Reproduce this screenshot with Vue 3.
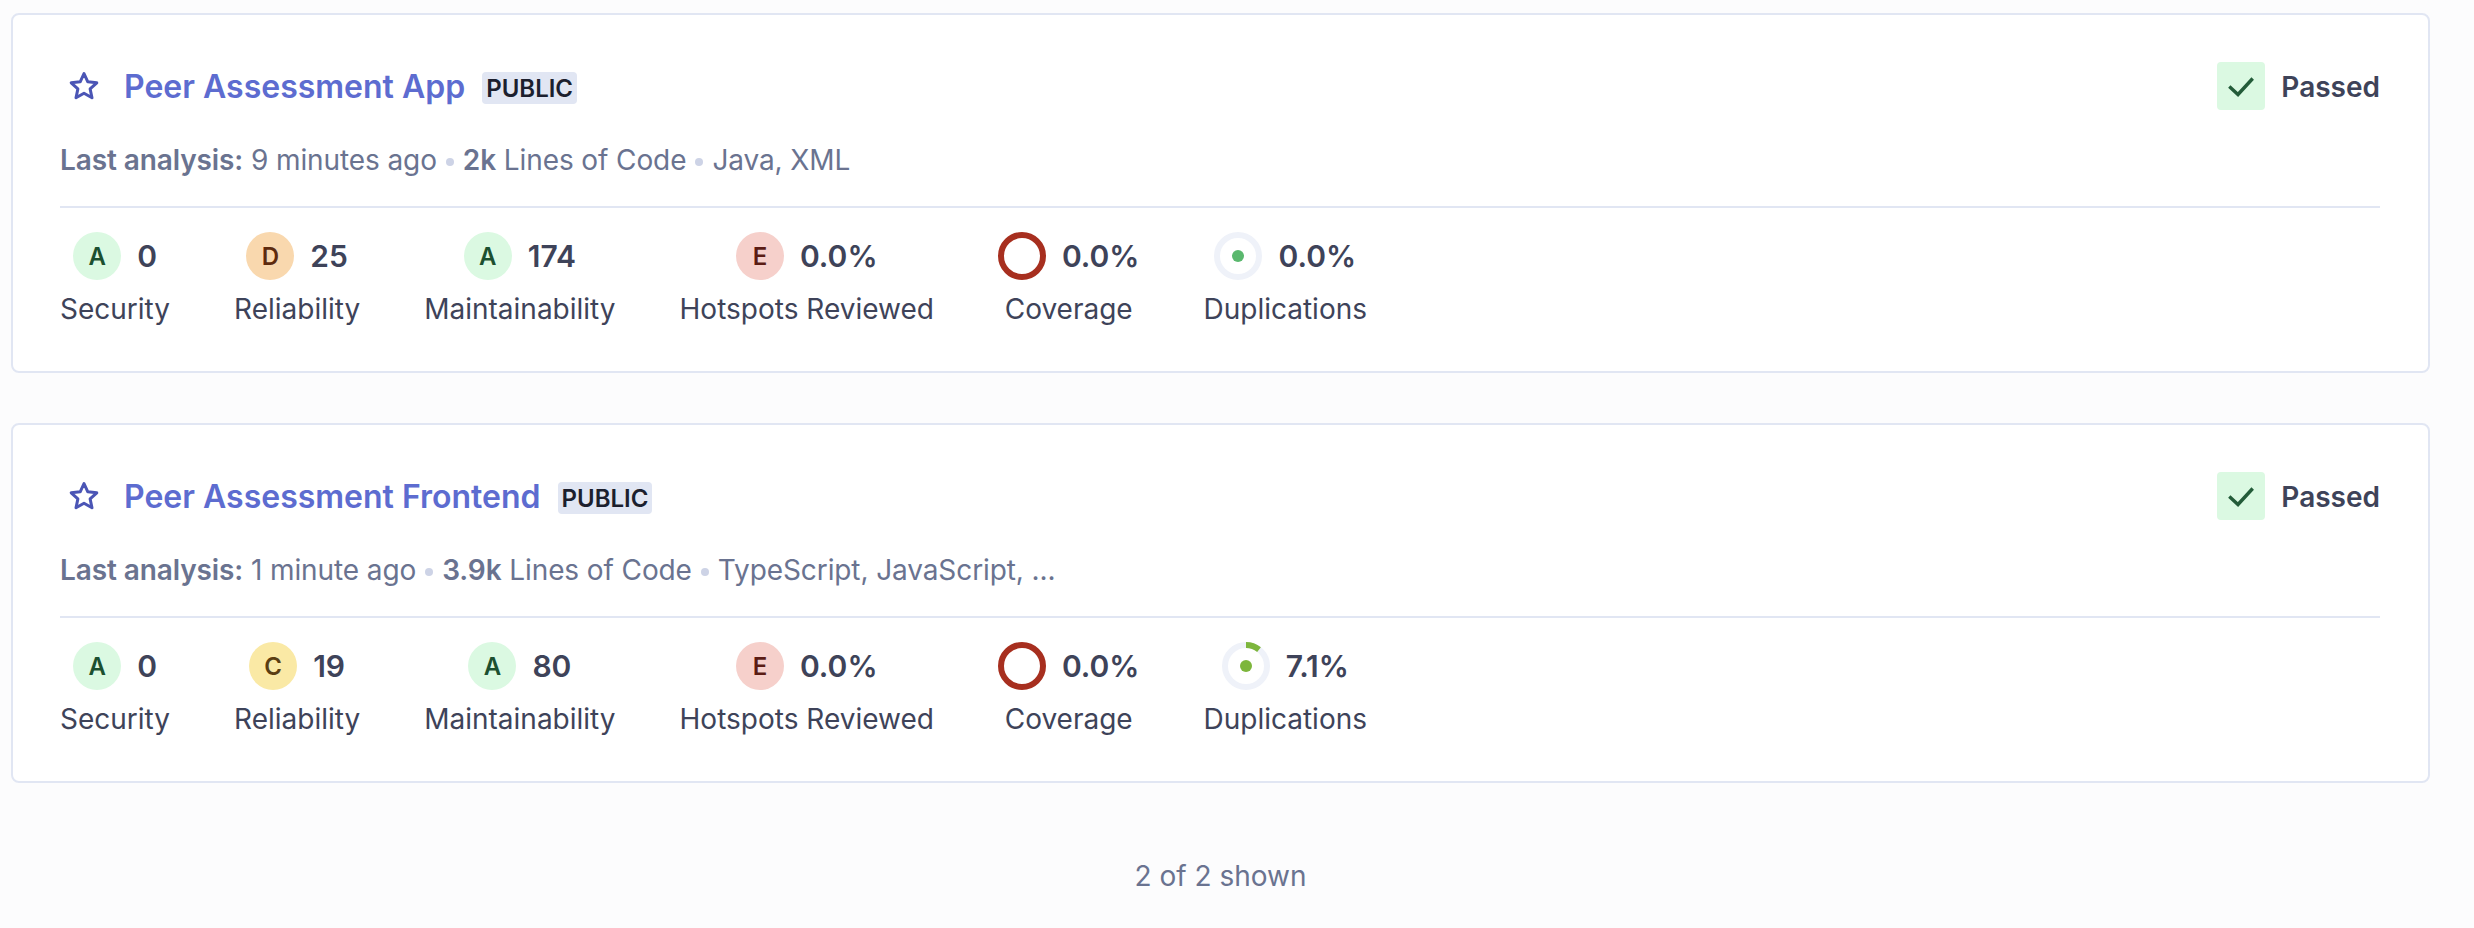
<template>
  <div class="project-list">
    <div v-for="project in projects" :key="project.name" class="project-card">
      <div class="card-head">
        <div class="title-row">
          <svg class="star" width="32" height="32" viewBox="0 0 32 32">
            <path d="M16 3.5l3.8 8.3 9 1-6.7 6.1 1.9 8.9-8-4.6-8 4.6 1.9-8.9-6.7-6.1 9-1z" fill="none" stroke="#4b55b5" stroke-width="3" stroke-linejoin="round" />
          </svg>
          <a class="title">{{ project.name }}</a>
          <span class="badge">PUBLIC</span>
        </div>
        <div class="status">
          <span class="status-box">
            <svg width="28" height="28" viewBox="0 0 28 28">
              <path d="M2.3 14.5l8.7 8L25.7 6.5" fill="none" stroke="#235c39" stroke-width="3.4" />
            </svg>
          </span>
          <span class="status-text">Passed</span>
        </div>
      </div>

      <div class="meta">
        <b>Last analysis:</b> {{ project.analysis }}<i class="dot"></i><b>{{ project.lines }}</b> Lines of Code<i class="dot"></i>{{ project.languages }}
      </div>

      <div class="metrics">
        <div v-for="metric in project.metrics" :key="metric.label" class="metric">
          <div class="metric-value">
            <span v-if="metric.rating" class="rating" :class="'rating-' + metric.rating">{{ metric.rating }}</span>
            <span v-else-if="metric.type === 'coverage'" class="coverage-ring"></span>
            <svg v-else class="dup-ring" width="48" height="48" viewBox="0 0 48 48">
              <circle cx="24" cy="24" r="21" fill="none" stroke="#eff2f9" stroke-width="6" />
              <circle
                v-if="metric.arc"
                cx="24"
                cy="24"
                r="21"
                fill="none"
                :stroke="metric.color"
                stroke-width="6"
                :stroke-dasharray="`${metric.arc} 200`"
                transform="rotate(-90 24 24)"
              />
              <circle cx="24" cy="24" r="6" :fill="metric.color" />
            </svg>
            <span class="value">{{ metric.value }}</span>
          </div>
          <div class="label">{{ metric.label }}</div>
        </div>
      </div>
    </div>

    <div class="shown">2 of 2 shown</div>
  </div>
</template>

<script setup>
const projects = [
  {
    name: 'Peer Assessment App',
    analysis: '9 minutes ago',
    lines: '2k',
    languages: 'Java, XML',
    metrics: [
      { label: 'Security', rating: 'A', value: '0' },
      { label: 'Reliability', rating: 'D', value: '25' },
      { label: 'Maintainability', rating: 'A', value: '174' },
      { label: 'Hotspots Reviewed', rating: 'E', value: '0.0%' },
      { label: 'Coverage', type: 'coverage', value: '0.0%' },
      { label: 'Duplications', type: 'dup', value: '0.0%', color: '#5ab86e', arc: 0 },
    ],
  },
  {
    name: 'Peer Assessment Frontend',
    analysis: '1 minute ago',
    lines: '3.9k',
    languages: 'TypeScript, JavaScript, ...',
    metrics: [
      { label: 'Security', rating: 'A', value: '0' },
      { label: 'Reliability', rating: 'C', value: '19' },
      { label: 'Maintainability', rating: 'A', value: '80' },
      { label: 'Hotspots Reviewed', rating: 'E', value: '0.0%' },
      { label: 'Coverage', type: 'coverage', value: '0.0%' },
      { label: 'Duplications', type: 'dup', value: '7.1%', color: '#7db63c', arc: 14 },
    ],
  },
]
</script>

<style>
html,
body {
  background: #fcfcfd;
}
</style>

<style scoped>
.project-list {
  padding: 13px 44px 0 11px;
  font-family: Inter, 'Liberation Sans', sans-serif;
  color: #3e4359;
}

.project-card {
  box-sizing: border-box;
  height: 360px;
  margin-bottom: 50px;
  padding: 47px 48px 0 47px;
  background: #fff;
  border: 2px solid #e1e6f3;
  border-radius: 8px;
}

.card-head {
  display: flex;
  align-items: center;
  justify-content: space-between;
  height: 48px;
}

.title-row {
  display: flex;
  align-items: center;
}

.star {
  margin-left: 8px;
  margin-right: 24px;
}

.title {
  font-size: 32px;
  font-weight: 600;
  color: #5d6cd0;
}

.badge {
  margin-left: 17px;
  margin-top: 3px;
  padding: 0 4px;
  height: 32px;
  line-height: 33px;
  border-radius: 4px;
  background: #e1e6f3;
  color: #1c1f2e;
  font-size: 24px;
  font-weight: 600;
}

.status {
  display: flex;
  align-items: center;
}

.status-box {
  display: flex;
  align-items: center;
  justify-content: center;
  width: 48px;
  height: 48px;
  border-radius: 4px;
  background: #dbf9e2;
}

.status-text {
  margin-left: 16px;
  margin-top: 1px;
  font-size: 28px;
  font-weight: 600;
}

.meta {
  margin-top: 28px;
  height: 44px;
  line-height: 44px;
  font-size: 28px;
  letter-spacing: -0.1px;
  color: #6a7390;
}

.meta b {
  font-weight: 600;
}

.dot {
  display: inline-block;
  width: 8px;
  height: 8px;
  margin: 0 9px;
  border-radius: 50%;
  background: #cdd3e6;
  vertical-align: middle;
}

.metrics {
  display: flex;
  gap: 64px;
  margin-top: 24px;
  padding-top: 24px;
  border-top: 2px solid #e1e6f3;
}

.metric {
  display: flex;
  flex-direction: column;
  align-items: center;
}

.metric-value {
  display: flex;
  align-items: center;
  height: 48px;
}

.rating {
  display: flex;
  align-items: center;
  justify-content: center;
  width: 48px;
  height: 48px;
  border-radius: 50%;
  font-size: 24px;
  font-weight: 600;
}

.rating-A {
  background: #dbf9e2;
  color: #1c5030;
}

.rating-C {
  background: #fae9a5;
  color: #5a3e12;
}

.rating-D {
  background: #f9d8ae;
  color: #5e2b0e;
}

.rating-E {
  background: #f6d0cb;
  color: #5b1c14;
}

.coverage-ring {
  box-sizing: border-box;
  width: 48px;
  height: 48px;
  border: 6px solid #a72f1f;
  border-radius: 50%;
}

.dup-ring {
  display: block;
}

.value {
  margin-left: 16px;
  font-size: 30px;
  font-weight: 600;
}

.label {
  margin-top: 7px;
  line-height: 44px;
  font-size: 28px;
  white-space: nowrap;
}

.shown {
  margin-top: 73px;
  text-align: center;
  line-height: 40px;
  font-size: 28px;
  color: #6a7390;
}
</style>
